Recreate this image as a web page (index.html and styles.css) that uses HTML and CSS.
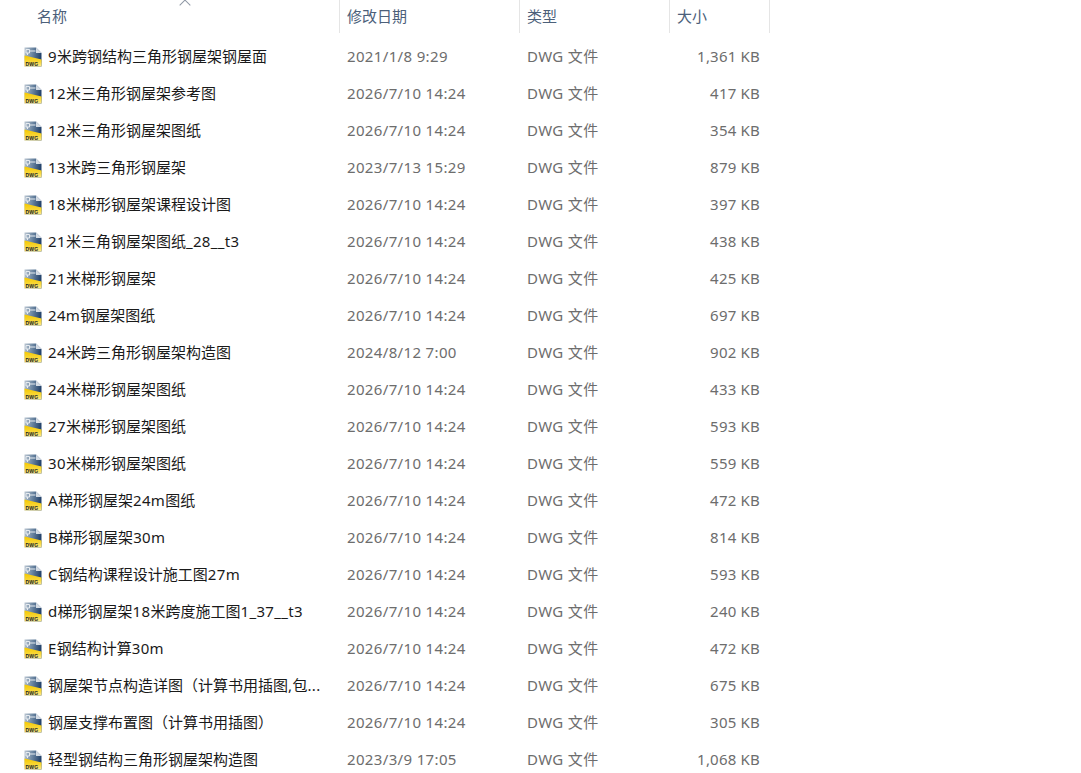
FILE: index.html
```html
<!DOCTYPE html>
<html lang="zh-CN">
  <head>
    <meta charset="UTF-8" />
    <meta name="viewport" content="width=device-width, initial-scale=1.0" />
    <title>钢屋架图纸</title>
    <link rel="stylesheet" href="styles.css">
  </head>
  <body>
    <svg class="defs" width="0" height="0">
      <defs>
        <linearGradient id="sheet" x1="0" y1="0" x2="1" y2="0.2">
          <stop offset="0" stop-color="#bcc7d2" />
          <stop offset="0.5" stop-color="#6b86a2" />
          <stop offset="1" stop-color="#24436c" />
        </linearGradient>
        <linearGradient id="band" x1="0" y1="0" x2="0" y2="1">
          <stop offset="0" stop-color="#f5c800" />
          <stop offset="0.6" stop-color="#f9d83a" />
          <stop offset="1" stop-color="#fdeb94" />
        </linearGradient>
        <symbol id="dwg" viewBox="0 0 18 20">
          <path d="M0.5 0.5H12L17.5 6V19.5H0.5Z" fill="url(#sheet)" />
          <path d="M12 0.5V6H17.5Z" fill="#d5dce4" />
          <path d="M2 2.5h3.5v3.5h-3.5zM5.5 4h6M3.5 6v2" fill="none" stroke="#e6ebf0" stroke-width="1" />
          <path d="M0.5 8.5L17.5 12.5V19.5H0.5Z" fill="url(#band)" />
          <text x="1.5" y="18.6" class="dwg-label">DWG</text>
        </symbol>
      </defs>
    </svg>

    <main class="list">
      <header class="head">
        <div class="head-cell name-head">名称<i class="sort"></i></div>
        <div class="head-cell">修改日期</div>
        <div class="head-cell">类型</div>
        <div class="head-cell">大小</div>
      </header>

      <section class="rows">
        <div class="row"><div class="name"><svg class="icon"><use href="#dwg" /></svg><span><b>9</b>米跨钢结构三角形钢屋架钢屋面</span></div><div class="cell">2021/1/8 9:29</div><div class="cell">DWG 文件</div><div class="cell size">1,361 KB</div></div>
        <div class="row"><div class="name"><svg class="icon"><use href="#dwg" /></svg><span><b>12</b>米三角形钢屋架参考图</span></div><div class="cell">2026/7/10 14:24</div><div class="cell">DWG 文件</div><div class="cell size">417 KB</div></div>
        <div class="row"><div class="name"><svg class="icon"><use href="#dwg" /></svg><span><b>12</b>米三角形钢屋架图纸</span></div><div class="cell">2026/7/10 14:24</div><div class="cell">DWG 文件</div><div class="cell size">354 KB</div></div>
        <div class="row"><div class="name"><svg class="icon"><use href="#dwg" /></svg><span><b>13</b>米跨三角形钢屋架</span></div><div class="cell">2023/7/13 15:29</div><div class="cell">DWG 文件</div><div class="cell size">879 KB</div></div>
        <div class="row"><div class="name"><svg class="icon"><use href="#dwg" /></svg><span><b>18</b>米梯形钢屋架课程设计图</span></div><div class="cell">2026/7/10 14:24</div><div class="cell">DWG 文件</div><div class="cell size">397 KB</div></div>
        <div class="row"><div class="name"><svg class="icon"><use href="#dwg" /></svg><span><b>21</b>米三角钢屋架图纸<b>_28__t3</b></span></div><div class="cell">2026/7/10 14:24</div><div class="cell">DWG 文件</div><div class="cell size">438 KB</div></div>
        <div class="row"><div class="name"><svg class="icon"><use href="#dwg" /></svg><span><b>21</b>米梯形钢屋架</span></div><div class="cell">2026/7/10 14:24</div><div class="cell">DWG 文件</div><div class="cell size">425 KB</div></div>
        <div class="row"><div class="name"><svg class="icon"><use href="#dwg" /></svg><span><b>24m</b>钢屋架图纸</span></div><div class="cell">2026/7/10 14:24</div><div class="cell">DWG 文件</div><div class="cell size">697 KB</div></div>
        <div class="row"><div class="name"><svg class="icon"><use href="#dwg" /></svg><span><b>24</b>米跨三角形钢屋架构造图</span></div><div class="cell">2024/8/12 7:00</div><div class="cell">DWG 文件</div><div class="cell size">902 KB</div></div>
        <div class="row"><div class="name"><svg class="icon"><use href="#dwg" /></svg><span><b>24</b>米梯形钢屋架图纸</span></div><div class="cell">2026/7/10 14:24</div><div class="cell">DWG 文件</div><div class="cell size">433 KB</div></div>
        <div class="row"><div class="name"><svg class="icon"><use href="#dwg" /></svg><span><b>27</b>米梯形钢屋架图纸</span></div><div class="cell">2026/7/10 14:24</div><div class="cell">DWG 文件</div><div class="cell size">593 KB</div></div>
        <div class="row"><div class="name"><svg class="icon"><use href="#dwg" /></svg><span><b>30</b>米梯形钢屋架图纸</span></div><div class="cell">2026/7/10 14:24</div><div class="cell">DWG 文件</div><div class="cell size">559 KB</div></div>
        <div class="row"><div class="name"><svg class="icon"><use href="#dwg" /></svg><span><b>A</b>梯形钢屋架<b>24m</b>图纸</span></div><div class="cell">2026/7/10 14:24</div><div class="cell">DWG 文件</div><div class="cell size">472 KB</div></div>
        <div class="row"><div class="name"><svg class="icon"><use href="#dwg" /></svg><span><b>B</b>梯形钢屋架<b>30m</b></span></div><div class="cell">2026/7/10 14:24</div><div class="cell">DWG 文件</div><div class="cell size">814 KB</div></div>
        <div class="row"><div class="name"><svg class="icon"><use href="#dwg" /></svg><span><b>C</b>钢结构课程设计施工图<b>27m</b></span></div><div class="cell">2026/7/10 14:24</div><div class="cell">DWG 文件</div><div class="cell size">593 KB</div></div>
        <div class="row"><div class="name"><svg class="icon"><use href="#dwg" /></svg><span><b>d</b>梯形钢屋架<b>18</b>米跨度施工图<b>1_37__t3</b></span></div><div class="cell">2026/7/10 14:24</div><div class="cell">DWG 文件</div><div class="cell size">240 KB</div></div>
        <div class="row"><div class="name"><svg class="icon"><use href="#dwg" /></svg><span><b>E</b>钢结构计算<b>30m</b></span></div><div class="cell">2026/7/10 14:24</div><div class="cell">DWG 文件</div><div class="cell size">472 KB</div></div>
        <div class="row"><div class="name"><svg class="icon"><use href="#dwg" /></svg><span>钢屋架节点构造详图（计算书用插图<b>,</b>包<b>...</b></span></div><div class="cell">2026/7/10 14:24</div><div class="cell">DWG 文件</div><div class="cell size">675 KB</div></div>
        <div class="row"><div class="name"><svg class="icon"><use href="#dwg" /></svg><span>钢屋支撑布置图（计算书用插图）</span></div><div class="cell">2026/7/10 14:24</div><div class="cell">DWG 文件</div><div class="cell size">305 KB</div></div>
        <div class="row"><div class="name"><svg class="icon"><use href="#dwg" /></svg><span>轻型钢结构三角形钢屋架构造图</span></div><div class="cell">2023/3/9 17:05</div><div class="cell">DWG 文件</div><div class="cell size">1,068 KB</div></div>
      </section>
    </main>
  </body>
</html>
```

FILE: styles.css
```css
html,
body {
  height: 100%;
  overflow: hidden;
}
body {
  margin: 0;
  background: #fff;
  font-family: "Noto Sans", "Noto Sans CJK SC", sans-serif;
  font-size: 15px;
}
.defs {
  display: block;
  height: 0;
}
.list {
  width: 770px;
}
.head,
.row {
  display: grid;
  grid-template-columns: 339px 180px 150px 101px;
}
.head {
  height: 33px;
}
.head-cell {
  position: relative;
  padding-left: 7px;
  line-height: 33px;
  color: #4c607a;
  border-left: 1px solid #e5e5e5;
}
.name-head {
  padding-left: 37px;
  border-left: 0;
}
.head-cell:last-child {
  border-right: 1px solid #e5e5e5;
}
.sort {
  position: absolute;
  top: 0;
  left: 181px;
  width: 7px;
  height: 7px;
  border-top: 1px solid #8d96a3;
  border-left: 1px solid #8d96a3;
  transform: translateY(1px) rotate(45deg);
}
.rows {
  padding-top: 5px;
}
.row {
  height: 37px;
  line-height: 37px;
  color: #6d6d6d;
}
.name {
  display: flex;
  align-items: center;
  gap: 6px;
  padding-left: 24px;
  color: #1a1a1a;
}
/* latin runs in the names are a bit wider than the font gives */
.name b {
  font-weight: 400;
  letter-spacing: 0.35px;
}
.icon {
  width: 18px;
  height: 20px;
  flex: none;
}
.cell {
  padding-left: 8px;
  white-space: nowrap;
  letter-spacing: 0.35px;
}
.size {
  padding-left: 0;
  padding-right: 10px;
  text-align: right;
  letter-spacing: 0.2px;
}
.dwg-label {
  font-family: "Liberation Sans", sans-serif;
  font-size: 5px;
  font-weight: 700;
  letter-spacing: 0.2px;
  fill: #222;
}
```
